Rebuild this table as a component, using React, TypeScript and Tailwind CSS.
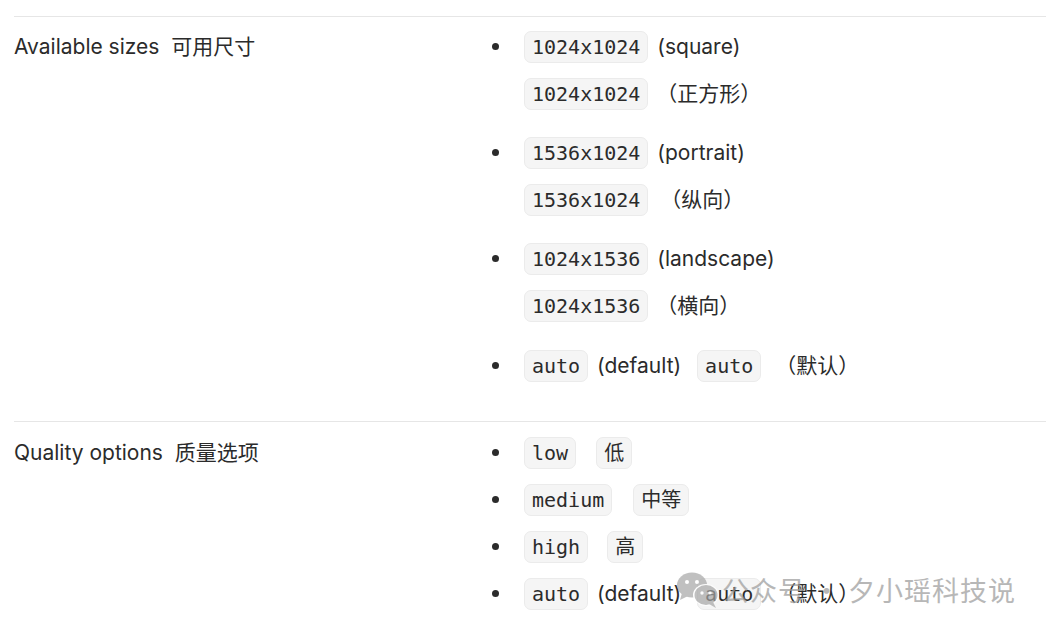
import React from "react";

const Code = ({ children, className = "" }: { children: React.ReactNode; className?: string }) => (
  <code
    className={
      "inline-flex items-center h-[32px] px-[7px] rounded-[7px] bg-[#f5f5f5] border border-[#ebebeb] text-[#2b2b2b] text-[20px] align-middle " +
      className
    }
    style={{ fontFamily: '"DejaVu Sans Mono", "Noto Sans CJK SC", monospace' }}
  >
    {children}
  </code>
);

const Line = ({ children }: { children: React.ReactNode }) => (
  <div className="h-[47px] flex items-center whitespace-pre">{children}</div>
);

const Item = ({ children, mb = "" }: { children: React.ReactNode; mb?: string }) => (
  <div className={"flex " + mb}>
    <div className="w-[34px] h-[47px] flex items-center">
      <span className="block w-[7px] h-[7px] rounded-full bg-[#2b2b2b] ml-[2px]" />
    </div>
    <div className="flex flex-col">{children}</div>
  </div>
);

export default function App() {
  const font = { fontFamily: 'Inter, "Noto Sans CJK SC", sans-serif' };
  return (
    <div className="relative w-[1046px] h-[632px] bg-white overflow-hidden text-[#2b2b2b] text-[21px]" style={font}>
      <div className="h-[16px]" />
      <div className="ml-[14px] border-t border-[#e6e6e6] pt-[6px] pb-[32px] grid grid-cols-[476px_1fr]">
        <div className="h-[47px] flex items-center whitespace-pre">Available sizes  可用尺寸</div>
        <div>
          <Item mb="mb-[12px]">
            <Line>
              <Code>1024x1024</Code><span className="ml-[3px]"> (square)</span>
            </Line>
            <Line>
              <Code>1024x1024</Code><span className="ml-[2px]"> （正方形）</span>
            </Line>
          </Item>
          <Item mb="mb-[12px]">
            <Line>
              <Code>1536x1024</Code><span className="ml-[3px]"> (portrait)</span>
            </Line>
            <Line>
              <Code>1536x1024</Code><span className="ml-[6px]"> （纵向）</span>
            </Line>
          </Item>
          <Item mb="mb-[13px]">
            <Line>
              <Code>1024x1536</Code><span className="ml-[3px]"> (landscape)</span>
            </Line>
            <Line>
              <Code>1024x1536</Code><span className="ml-[2px]"> （横向）</span>
            </Line>
          </Item>
          <Item>
            <Line>
              <Code>auto</Code>
              <span className="ml-[3px]"> (default) </span>
              <Code className="ml-[10px]">auto</Code>
              <span className="ml-[8px]"> （默认）</span>
            </Line>
          </Item>
        </div>
      </div>
      <div className="ml-[14px] border-t border-[#e6e6e6] pt-[7px] grid grid-cols-[476px_1fr]">
        <div className="h-[47px] flex items-center whitespace-pre">Quality options  质量选项</div>
        <div>
          <Item>
            <Line>
              <Code>low</Code>
              <Code className="ml-[20px]">低</Code>
            </Line>
          </Item>
          <Item>
            <Line>
              <Code>medium</Code>
              <Code className="ml-[21px]">中等</Code>
            </Line>
          </Item>
          <Item>
            <Line>
              <Code>high</Code>
              <Code className="ml-[19px]">高</Code>
            </Line>
          </Item>
          <Item>
            <Line>
              <Code>auto</Code>
              <span className="ml-[3px]"> (default) </span>
              <Code className="ml-[10px]">auto</Code>
              <span className="ml-[8px]"> （默认）</span>
            </Line>
          </Item>
        </div>
      </div>

      {/* watermark */}
      <div className="absolute left-[676px] top-[570px] flex items-center opacity-70 pointer-events-none">
        <svg width="46" height="38" viewBox="0 0 46 38">
          <ellipse cx="16" cy="14" rx="15" ry="12.5" fill="#a6a6a6" />
          <path d="M6 22 L4 29 L12 25 Z" fill="#a6a6a6" />
          <circle cx="11" cy="11" r="2" fill="#fff" />
          <circle cx="21" cy="11" r="2" fill="#fff" />
          <ellipse cx="30" cy="24" rx="13" ry="11" fill="#fff" />
          <ellipse cx="30" cy="24" rx="11.5" ry="10" fill="#a6a6a6" />
          <path d="M37 31 L40 37 L33 33 Z" fill="#a6a6a6" />
          <circle cx="26" cy="22" r="1.7" fill="#fff" />
          <circle cx="34" cy="22" r="1.7" fill="#fff" />
        </svg>
        <span
          className="ml-[0px] text-[27px] text-[#9a9a9a] tracking-[1px] whitespace-pre"
          style={{ fontFamily: '"Noto Sans CJK SC", sans-serif' }}
        >
          公众号 · 夕小瑶科技说
        </span>
      </div>
    </div>
  );
}
